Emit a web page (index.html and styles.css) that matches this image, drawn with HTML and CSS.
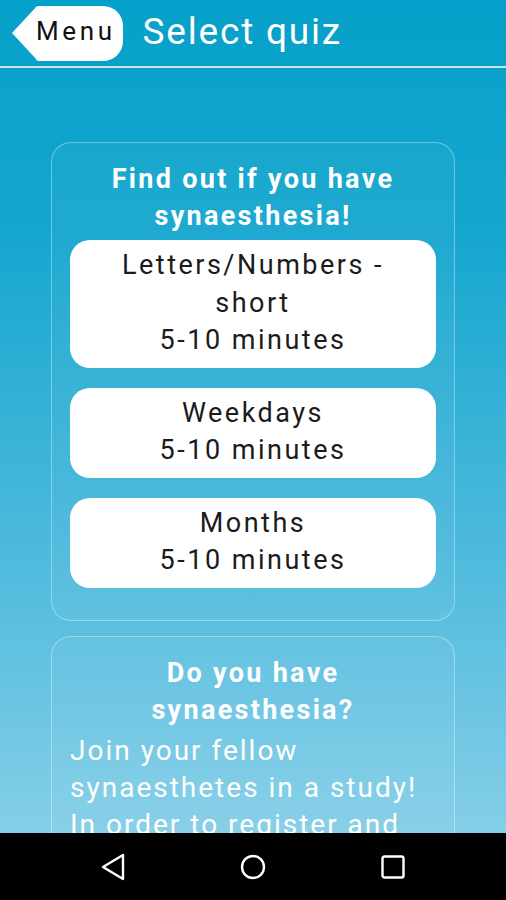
FILE: index.html
```html
<!DOCTYPE html>
<html>
<head>
<meta charset="UTF-8">
<title>Select quiz</title>
<link rel="stylesheet" href="styles.css">
</head>
<body>
<div class="screen">
	<div class="topbar">
		<a class="menu" href="javascript:;"><span class="menu-tip"></span><span class="menu-body">Menu</span></a>
		<h1>Select quiz</h1>
	</div>

	<div class="content">
		<div class="card">
			<h2>Find out if you have synaesthesia!</h2>
			<a class="quiz" href="javascript:;">Letters/Numbers -<br>short<br>5-10 minutes</a>
			<a class="quiz" href="javascript:;">Weekdays<br>5-10 minutes</a>
			<a class="quiz" href="javascript:;">Months<br>5-10 minutes</a>
		</div>

		<div class="card">
			<h2>Do you have synaesthesia?</h2>
			<p>Join your fellow synaesthetes in a study! In order to register and participate you need to log in first.</p>
		</div>
	</div>

	<div class="navbar">
		<svg width="26" height="28" viewBox="0 0 26 28"><path d="M23 2 L3 14 L23 26 Z" fill="none" stroke="#fff" stroke-width="2.4" stroke-linejoin="round"/></svg>
		<svg width="26" height="26" viewBox="0 0 26 26"><circle cx="13" cy="13" r="11" fill="none" stroke="#fff" stroke-width="2.4"/></svg>
		<svg width="26" height="26" viewBox="0 0 26 26"><rect x="2.5" y="2.5" width="21" height="21" rx="2" fill="none" stroke="#fff" stroke-width="2.4"/></svg>
	</div>
</div>
</body>
</html>
```

FILE: styles.css
```css
html,body{margin:0;padding:0;overflow:hidden;}
body{font-family:Roboto,"Liberation Sans",Arial,sans-serif;}
h1,h2,p{margin:0;padding:0;}
a{text-decoration:none;}

.screen{width:506px;height:900px;display:flex;flex-direction:column;background:linear-gradient(#05a0c9 0,#15a6cf 25%,#4bb9dc 60%,#92d3ea 100%);}

.topbar{height:66px;border-bottom:2px solid #c7eaf4;display:flex;align-items:center;padding-left:12px;gap:20px;flex-shrink:0;}
.menu{display:flex;height:55px;color:#111;}
.menu-tip{width:0;height:0;border-top:27.5px solid transparent;border-bottom:27.5px solid transparent;border-right:25px solid #fff;}
.menu-body{background:#fff;border-radius:3px 20px 20px 3px;padding:0 7px 5px 0;margin-left:-1px;font-size:26px;letter-spacing:3.6px;height:55px;line-height:50px;box-sizing:border-box;}
.topbar h1{color:#fff;font-weight:400;font-size:37px;letter-spacing:1.8px;margin-top:-4px;}

.content{flex:1;overflow:hidden;padding:74px 51px 0;display:flex;flex-direction:column;gap:15px;}
.card{border:1.5px solid rgba(255,255,255,.35);border-radius:20px;background:rgba(255,255,255,.04);padding:18px 18px 32px;display:flex;flex-direction:column;gap:20px;}
.card h2{color:#fff;font-weight:700;font-size:27px;letter-spacing:2.3px;line-height:37px;text-align:center;margin-bottom:-15px;}
.quiz{display:block;background:#fff;border-radius:20px;color:#1b1b1b;text-align:center;font-size:27px;letter-spacing:2.5px;line-height:37.5px;padding:7px 0 8px;}
.card p{color:#fff;font-size:28px;letter-spacing:2px;line-height:37px;margin-top:-2px;}

.navbar{height:67px;flex-shrink:0;background:#000;display:flex;justify-content:center;align-items:center;gap:114px;}
.navbar svg{display:block;}
```
